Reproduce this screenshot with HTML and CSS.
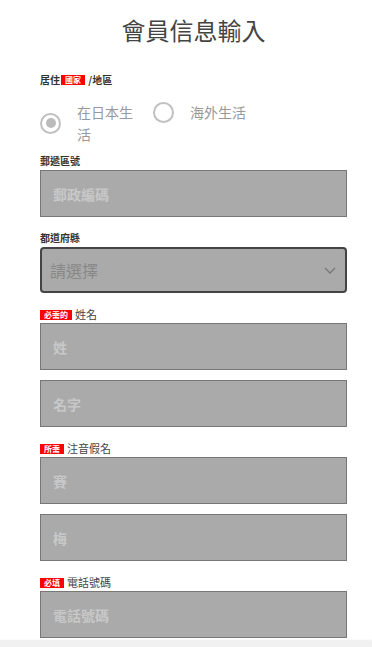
FILE: index.html
```html
<!DOCTYPE html>
<html lang="zh-Hant">
<head>
    <meta charset="UTF-8">
    <meta name="viewport" content="width=device-width, initial-scale=1.0">
    <title>會員信息輸入</title>
    <link rel="stylesheet" href="styles.css">
</head>
<body>
    <div class="container">
        <h1>會員信息輸入</h1>

        <div class="label top-label">居住<span class="badge">國家</span> /地區</div>
        <div class="radio-group">
            <label class="radio-opt">
                <span class="radio checked"></span>
                <span class="radio-text">在日本生活</span>
            </label>
            <label class="radio-opt">
                <span class="radio"></span>
                <span class="radio-text">海外生活</span>
            </label>
        </div>

        <div class="field">
            <div class="label">郵遞區號</div>
            <input type="text" class="box" placeholder="郵政編碼">
        </div>

        <div class="field">
            <div class="label">都道府縣</div>
            <div class="select">
                <span>請選擇</span>
                <svg width="12" height="7" viewBox="0 0 12 7"><polyline points="1,1 6,6 11,1" fill="none" stroke="#777" stroke-width="1.3"/></svg>
            </div>
        </div>

        <div class="field">
            <div class="label req"><span class="badge">必需的</span>姓名</div>
            <input type="text" class="box" placeholder="姓">
            <input type="text" class="box next" placeholder="名字">
        </div>

        <div class="field">
            <div class="label req"><span class="badge">所需</span>注音假名</div>
            <input type="text" class="box" placeholder="賽">
            <input type="text" class="box next" placeholder="梅">
        </div>

        <div class="field">
            <div class="label req"><span class="badge">必填</span>電話號碼</div>
            <input type="text" class="box" placeholder="電話號碼">
        </div>
    </div>
    <div class="bottom-bar"></div>
</body>
</html>
```
FILE: styles.css
```css
body { margin: 0; font-family: "Noto Sans CJK TC", "Noto Sans", sans-serif; color: #333; background: #fff; }
.container { margin: 0 25px 0 40px; }
h1 { margin: 15px 0 0; font-size: 24px; line-height: 30px; font-weight: normal; color: #444; text-align: center; }

.label { font-size: 10px; line-height: 14px; font-weight: bold; color: #333; margin-bottom: 2px; }
.top-label { margin-top: 28px; margin-bottom: 0; }
.label.req { font-size: 11px; font-weight: normal; color: #444; }
.badge { display: inline-block; background: #f00; color: #fff; font-size: 8px; line-height: 10px; font-weight: bold; padding: 0 4px; margin: 0 1px; vertical-align: 1px; }
.req .badge { margin: 0 3px 0 0; }

.radio-group { display: flex; align-items: flex-start; gap: 18px; margin-top: 14px; }
.radio-opt { display: flex; align-items: center; gap: 16px; }
.radio { width: 17px; height: 17px; border: 2px solid #c0c0c0; border-radius: 50%; position: relative; flex: none; }
.radio.checked::after { content: ""; position: absolute; left: 3.5px; top: 3.5px; width: 10px; height: 10px; border-radius: 50%; background: #bbb; }
.radio-text { font-size: 14px; line-height: 22px; color: #999; max-width: 58px; }

.field { margin-top: 14px; }
.radio-group + .field { margin-top: 9px; }
.box { display: block; box-sizing: border-box; width: 100%; height: 47px; margin: 0; padding: 0 12px; background: #aaa; border: 1px solid #777; border-radius: 0; font-family: inherit; font-size: 14px; font-weight: bold; color: #333; outline: none; }
.box::placeholder { color: #c8c8c8; }
.box.next { margin-top: 10px; }

.select { box-sizing: border-box; height: 46px; display: flex; align-items: center; justify-content: space-between; padding: 0 9px 0 8px; background: #aaa; border: 2px solid #444; border-radius: 4px; font-size: 16px; color: #888; }

.bottom-bar { position: fixed; left: 0; right: 0; bottom: 0; height: 6px; background: #f1f1f1; box-shadow: 0 -1px 2px rgba(0,0,0,0.08); }
```
